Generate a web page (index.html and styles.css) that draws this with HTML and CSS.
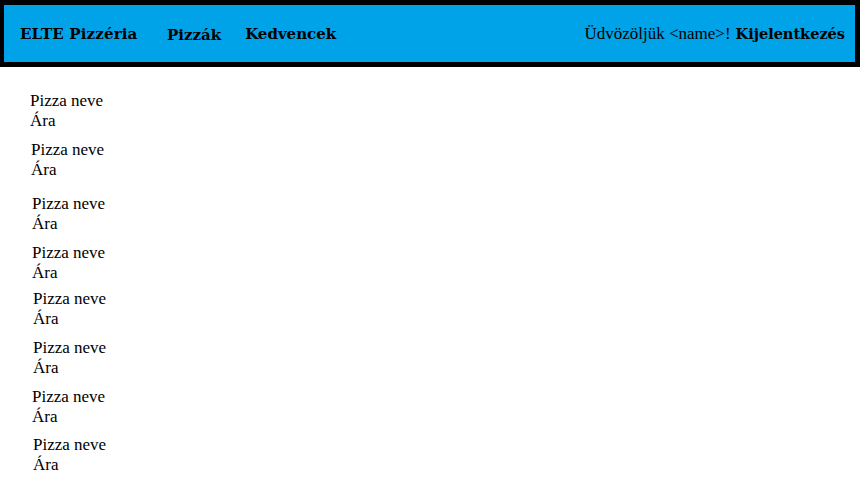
FILE: index.html
```html
<!DOCTYPE html>
<html lang="hu">
<head>
<meta charset="utf-8">
<title>ELTE Pizzéria</title>
<link rel="stylesheet" href="styles.css">
</head>
<body>
<header class="topbar">
  <div class="brand">ELTE Pizzéria</div>
  <nav class="menu">
    <a class="menu-link menu-link-low" href="#">Pizzák</a>
    <a class="menu-link" href="#">Kedvencek</a>
  </nav>
  <div class="user">
    <span class="greeting">Üdvözöljük &lt;name&gt;!</span>
    <a class="logout" href="#">Kijelentkezés</a>
  </div>
</header>
<main class="list">
  <div class="pizza"><div>Pizza neve</div><div>Ára</div></div>
  <div class="pizza pizza-in1"><div>Pizza neve</div><div>Ára</div></div>
  <div class="pizza pizza-in2 pizza-wide"><div>Pizza neve</div><div>Ára</div></div>
  <div class="pizza pizza-in2"><div>Pizza neve</div><div>Ára</div></div>
  <div class="pizza pizza-in3 pizza-tight"><div>Pizza neve</div><div>Ára</div></div>
  <div class="pizza pizza-in3"><div>Pizza neve</div><div>Ára</div></div>
  <div class="pizza pizza-in2"><div>Pizza neve</div><div>Ára</div></div>
  <div class="pizza pizza-in3 pizza-close"><div>Pizza neve</div><div>Ára</div></div>
</main>
</body>
</html>
```

FILE: styles.css
```css
html, body {
  margin: 0;
  padding: 0;
  background: #ffffff;
  color: #000000;
  font-family: "Liberation Serif", "DejaVu Serif", serif;
  font-size: 16px;
}

.topbar {
  display: flex;
  align-items: center;
  height: 57px;
  background: #00a3e8;
  border: 5px solid #000000;
  border-left-width: 4px;
  padding: 0 10px 0 16px;
}

.brand {
  font-family: "DejaVu Serif", serif;
  font-weight: bold;
  font-size: 15px;
  letter-spacing: 0.15px;
  width: 147px;
}

.menu {
  display: flex;
  gap: 24px;
}

.menu-link {
  font-family: "DejaVu Serif", serif;
  font-weight: bold;
  font-size: 15px;
  color: #000000;
  text-decoration: none;
}

.menu-link-low {
  position: relative;
  top: 1px;
}

.user {
  margin-left: auto;
  display: flex;
  align-items: baseline;
  gap: 5px;
}

.greeting {
  font-size: 17px;
}

.logout {
  font-family: "DejaVu Serif", serif;
  font-weight: bold;
  font-size: 14.5px;
  color: #000000;
  text-decoration: none;
}

.list {
  display: flex;
  flex-direction: column;
  gap: 9px;
  padding: 24px 0 0 30px;
}

.pizza {
  font-size: 17px;
  line-height: 20px;
}

.pizza-in1 { padding-left: 1px; }
.pizza-in2 { padding-left: 2px; }
.pizza-in3 { padding-left: 3px; }

.pizza-wide { margin-top: 5px; }
.pizza-tight { margin-top: -3px; }
.pizza-close { margin-top: -1px; }
```
